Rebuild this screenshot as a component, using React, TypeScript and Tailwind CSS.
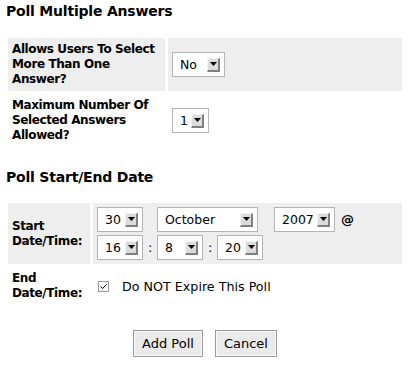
import React from 'react';

const font = { fontFamily: '"DejaVu Sans", Verdana, sans-serif' };

function Select({ value, width }: { value: string; width: number }) {
  return (
    <div
      className="flex h-[25px] items-center justify-between border border-[#b4b4b4] bg-white pl-[7px] pr-[4px] text-[12.5px] font-normal tracking-normal text-black"
      style={{ width }}
    >
      <span>{value}</span>
      <span className="flex h-[14px] w-[13px] items-center justify-center border-t border-l border-t-[#f4f4f4] border-l-[#f4f4f4] border-r-2 border-b-2 border-r-[#808080] border-b-[#808080] bg-[#dcdcdc]">
        <svg width="7" height="4" viewBox="0 0 7 4">
          <path d="M0 0H7L3.5 4Z" fill="#000" />
        </svg>
      </span>
    </div>
  );
}

function Button({ children }: { children: React.ReactNode }) {
  return (
    <button className="h-[27px] border border-[#9a9a9a] bg-[#eaeaea] px-[2px] text-[13px] text-black shadow-[inset_0_0_0_1px_#fafafa]">
      <span className="px-[6px]">{children}</span>
    </button>
  );
}

export default function App() {
  return (
    <div className="min-h-[368px] w-[410px] bg-white pt-[3px] text-black" style={font}>
      <h2 className="pl-[6px] text-[14px] font-bold leading-[17px] tracking-[-0.2px]">Poll Multiple Answers</h2>

      <div className="mx-[8px] mt-[18px] grid grid-cols-[157px_1fr] gap-[3px] text-[12px] font-bold leading-[15px] tracking-[-0.4px]">
        <div className="bg-[#eeeeee] px-[4px] py-[4px]">
          Allows Users To Select More Than One Answer?
        </div>
        <div className="flex items-center bg-[#eeeeee] pl-[4px]">
          <Select value="No" width={53} />
        </div>
        <div className="px-[4px] py-[4px]">Maximum Number Of Selected Answers Allowed?</div>
        <div className="flex items-center pl-[4px]">
          <Select value="1" width={37} />
        </div>
      </div>

      <h2 className="mt-[22px] pl-[6px] text-[14px] font-bold leading-[17px] tracking-[-0.2px]">Poll Start/End Date</h2>

      <div className="mx-[8px] mt-[17px] grid grid-cols-[82px_1fr] gap-[3px] text-[12px] font-bold leading-[15px] tracking-[-0.4px]">
        <div className="flex items-center bg-[#eeeeee] px-[4px]">
          <div>
            Start
            <br />
            Date/Time:
          </div>
        </div>
        <div className="flex flex-col gap-[3px] bg-[#eeeeee] py-[4px] pl-[4px]">
          <div className="flex items-center">
            <Select value="30" width={46} />
            <div className="w-[14px]" />
            <Select value="October" width={101} />
            <div className="w-[16px]" />
            <Select value="2007" width={61} />
            <span className="ml-[6px] text-[13px]">@</span>
          </div>
          <div className="flex items-center">
            <Select value="16" width={46} />
            <span className="w-[14px] text-center text-[13px] font-normal">:</span>
            <Select value="8" width={46} />
            <span className="w-[14px] text-center text-[13px] font-normal">:</span>
            <Select value="20" width={46} />
          </div>
        </div>
        <div className="px-[4px] py-[4px]">
          End
          <br />
          Date/Time:
        </div>
        <div className="flex items-center pl-[5px] font-normal tracking-normal">
          <span className="flex h-[11px] w-[11px] items-center justify-center border border-[#9a9a9a] bg-white">
            <svg width="7" height="5" viewBox="0 0 7 5">
              <path d="M0.5 2.5L2.5 4.5L6.5 0.5" stroke="#000" strokeWidth="1" fill="none" />
            </svg>
          </span>
          <span className="ml-[13px] text-[12.7px]">Do NOT Expire This Poll</span>
        </div>
      </div>

      <div className="mt-[25px] flex justify-center gap-[12px]">
        <Button>Add Poll</Button>
        <Button>Cancel</Button>
      </div>
    </div>
  );
}
